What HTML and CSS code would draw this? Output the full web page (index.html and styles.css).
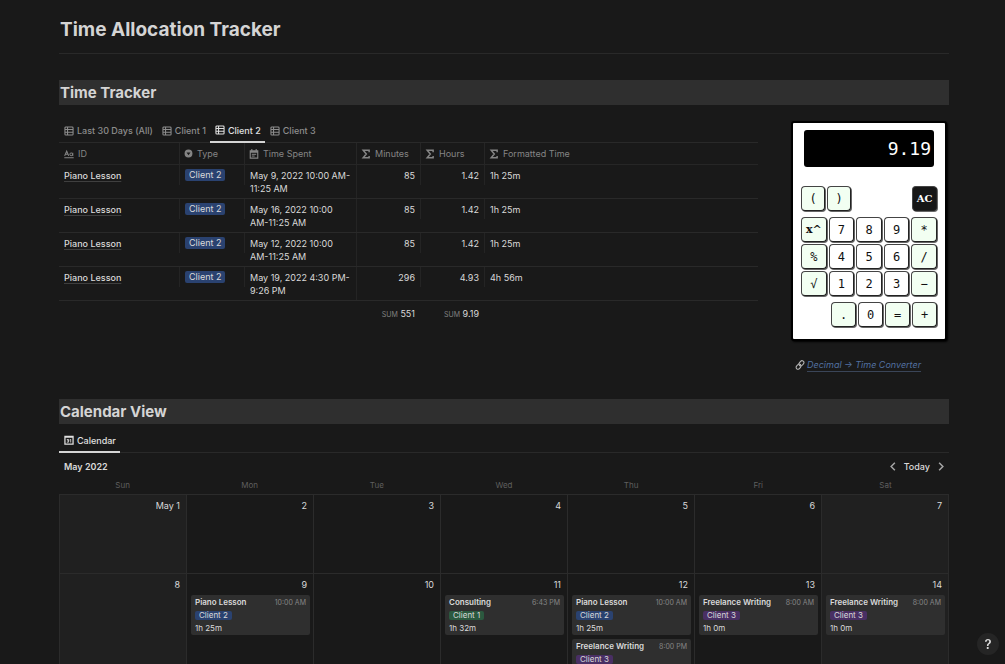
FILE: index.html
```html
<!DOCTYPE html>
<html lang="en">
<head>
<meta charset="utf-8">
<title>Time Allocation Tracker</title>
<link rel="stylesheet" href="styles.css">
</head>
<body>
<svg class="defs" aria-hidden="true">
  <symbol id="i-table" viewBox="0 0 16 16"><path d="M3 1.500h10a1.500 1.500 0 0 1 1.500 1.500v10a1.500 1.500 0 0 1-1.500 1.500H3A1.500 1.500 0 0 1 1.500 13V3A1.500 1.500 0 0 1 3 1.500zM1.500 5.500h13M1.500 10h13M5.700 1.500v13" fill="none" stroke="currentColor" stroke-width="1.700"/></symbol>
  <symbol id="i-sigma" viewBox="0 0 16 16"><path d="M13 5V2H3.500l5 6-5 6H13v-3" fill="none" stroke="currentColor" stroke-width="2.400"/></symbol>
  <symbol id="i-select" viewBox="0 0 16 16"><path fill="currentColor" fill-rule="evenodd" d="M8 1a7 7 0 1 0 0 14A7 7 0 0 0 8 1zM4.500 6h7L8 11z"/></symbol>
  <symbol id="i-date" viewBox="0 0 16 16"><path d="M2 3h12v11.500H2zM2 5h12M4.500 0v3M11.500 0v3" fill="none" stroke="currentColor" stroke-width="1.800"/><path d="M4.500 8.500h7M4.500 11.300h4.500" stroke="currentColor" stroke-width="1.600"/></symbol>
  <symbol id="i-cal" viewBox="0 0 16 16"><path d="M1.500 2h13v12.500h-13zM2 3.500h12" fill="none" stroke="currentColor" stroke-width="2"/><path d="M4.500 7.200H7.300v4.300H4.500M5 9.300h2.300M9 8l1.700-1v5" fill="none" stroke="currentColor" stroke-width="1.300"/></symbol>
  <symbol id="i-title" viewBox="0 0 16 14"><path d="M1 10 4.300 2.500 7.600 10M2.200 7.500h4.200M14 5v5M.5 13h15" fill="none" stroke="currentColor" stroke-width="1.700"/><circle cx="11.500" cy="7.500" r="2.200" fill="none" stroke="currentColor" stroke-width="1.600"/></symbol>
</svg>
<main class="page">
  <h1 class="title">Time Allocation Tracker</h1>
  <h2 class="banner">Time Tracker</h2>
  <div class="split">
    <section class="tracker">
      <nav class="tabs">
        <button class="tab"><svg class="icon"><use href="#i-table"/></svg>Last 30 Days (All)</button>
        <button class="tab"><svg class="icon"><use href="#i-table"/></svg>Client 1</button>
        <button class="tab active"><svg class="icon"><use href="#i-table"/></svg>Client 2</button>
        <button class="tab"><svg class="icon"><use href="#i-table"/></svg>Client 3</button>
      </nav>
      <table class="grid">
        <colgroup><col class="c-id"><col class="c-type"><col class="c-date"><col class="c-num"><col class="c-num"><col></colgroup>
        <thead><tr>
          <th><span class="head"><svg class="icon"><use href="#i-title"/></svg>ID</span></th>
          <th><span class="head"><svg class="icon small"><use href="#i-select"/></svg>Type</span></th>
          <th><span class="head"><svg class="icon"><use href="#i-date"/></svg>Time Spent</span></th>
          <th><span class="head"><svg class="icon"><use href="#i-sigma"/></svg>Minutes</span></th>
          <th><span class="head"><svg class="icon"><use href="#i-sigma"/></svg>Hours</span></th>
          <th><span class="head"><svg class="icon"><use href="#i-sigma"/></svg>Formatted Time</span></th>
        </tr></thead>
        <tbody>
          <tr><td><a class="name" href="#">Piano Lesson</a></td><td><span class="tag blue">Client 2</span></td><td class="full">May 9, 2022 10:00 AM-<br>11:25 AM</td><td class="num">85</td><td class="num">1.42</td><td>1h 25m</td></tr>
          <tr><td><a class="name" href="#">Piano Lesson</a></td><td><span class="tag blue">Client 2</span></td><td class="full">May 16, 2022 10:00<br>AM-11:25 AM</td><td class="num">85</td><td class="num">1.42</td><td>1h 25m</td></tr>
          <tr><td><a class="name" href="#">Piano Lesson</a></td><td><span class="tag blue">Client 2</span></td><td class="full">May 12, 2022 10:00<br>AM-11:25 AM</td><td class="num">85</td><td class="num">1.42</td><td>1h 25m</td></tr>
          <tr><td><a class="name" href="#">Piano Lesson</a></td><td><span class="tag blue">Client 2</span></td><td class="full">May 19, 2022 4:30 PM-<br>9:26 PM</td><td class="num">296</td><td class="num">4.93</td><td>4h 56m</td></tr>
        </tbody>
        <tfoot><tr><td></td><td></td><td></td><td class="num"><small>SUM</small> 551</td><td class="num"><small>SUM</small> 9.19</td><td></td></tr></tfoot>
      </table>
    </section>
    <aside class="side">
      <div class="calc">
        <output class="screen">9.19</output>
        <div class="keys top"><button class="key op">(</button><button class="key op">)</button><button class="key clear">AC</button></div>
        <div class="keys pad">
          <button class="key op slab">x^</button><button class="key">7</button><button class="key">8</button><button class="key">9</button><button class="key op">*</button>
          <button class="key op">%</button><button class="key">4</button><button class="key">5</button><button class="key">6</button><button class="key op">/</button>
          <button class="key op">√</button><button class="key">1</button><button class="key">2</button><button class="key">3</button><button class="key op">−</button>
        </div>
        <div class="keys bottom"><button class="key op">.</button><button class="key">0</button><button class="key op">=</button><button class="key op">+</button></div>
      </div>
      <p class="convert"><svg class="chain" viewBox="0 0 16 16"><g transform="rotate(-50 8 8)" fill="none" stroke="currentColor" stroke-width="1.700"><rect x="0" y="5" width="9" height="6" rx="3"/><rect x="7" y="5" width="9" height="6" rx="3"/></g></svg><a href="#">Decimal → Time Converter</a></p>
    </aside>
  </div>
  <h2 class="banner second">Calendar View</h2>
  <section class="calendar">
    <nav class="tabs caltabs"><button class="tab active"><svg class="icon"><use href="#i-cal"/></svg>Calendar</button></nav>
    <div class="calbar">
      <strong>May 2022</strong>
      <div class="pager">
        <button aria-label="Previous month"><svg class="chev" viewBox="0 0 8 12"><path d="M6.500 1 1.500 6l5 5"/></svg></button>
        <button class="today">Today</button>
        <button aria-label="Next month"><svg class="chev" viewBox="0 0 8 12"><path d="M1.500 1 6.500 6l-5 5"/></svg></button>
      </div>
    </div>
    <div class="week names"><span>Sun</span><span>Mon</span><span>Tue</span><span>Wed</span><span>Thu</span><span>Fri</span><span>Sat</span></div>
    <div class="week days">
      <div class="day off"><p>May 1</p></div><div class="day"><p>2</p></div><div class="day"><p>3</p></div><div class="day"><p>4</p></div><div class="day"><p>5</p></div><div class="day"><p>6</p></div><div class="day off"><p>7</p></div>
      <div class="day off"><p>8</p></div>
      <div class="day"><p>9</p>
        <article class="event"><header><b>Piano Lesson</b><time>10:00 AM</time></header><span class="tag blue">Client 2</span><div>1h 25m</div></article></div>
      <div class="day"><p>10</p></div>
      <div class="day"><p>11</p>
        <article class="event"><header><b>Consulting</b><time>6:43 PM</time></header><span class="tag green">Client 1</span><div>1h 32m</div></article></div>
      <div class="day"><p>12</p>
        <article class="event"><header><b>Piano Lesson</b><time>10:00 AM</time></header><span class="tag blue">Client 2</span><div>1h 25m</div></article>
        <article class="event"><header><b>Freelance Writing</b><time>8:00 PM</time></header><span class="tag purple">Client 3</span></article></div>
      <div class="day"><p>13</p>
        <article class="event"><header><b>Freelance Writing</b><time>8:00 AM</time></header><span class="tag purple">Client 3</span><div>1h 0m</div></article></div>
      <div class="day off"><p>14</p>
        <article class="event"><header><b>Freelance Writing</b><time>8:00 AM</time></header><span class="tag purple">Client 3</span><div>1h 0m</div></article></div>
    </div>
  </section>
</main>
<button class="help" aria-label="Help">?</button>
</body>
</html>
```

FILE: styles.css
```css
* { box-sizing: border-box; }
body {
  margin: 0;
  height: 100vh;
  overflow: hidden;
  background: #191919;
  color: #dadada;
  font: 9px/13px Inter, "Liberation Sans", sans-serif;
}
button { font: inherit; color: inherit; background: none; border: 0; padding: 0; }
h1, h2, p { margin: 0; }
.defs { display: none; }
.page { padding: 6px 56px 0 59px; }

.title {
  height: 48px;
  padding: 0 1px;
  border-bottom: 1px solid #292929;
  color: #d4d4d4;
  font-size: 19px;
  line-height: 48px;
  font-weight: 700;
}
.banner {
  margin-top: 26px;
  padding: 0 1px;
  background: #2f2f2f;
  color: #d4d4d4;
  font-size: 15px;
  line-height: 25px;
  font-weight: 700;
}
.banner.second { margin-top: 28px; }

.split { display: flex; align-items: flex-start; gap: 33px; }
.tracker { flex: 1; padding-top: 14px; }
.icon { width: 10px; height: 10px; flex: none; }
.icon.small { width: 9px; height: 9px; }
.tabs { display: flex; height: 24px; border-bottom: 1px solid #292929; }
.tab {
  display: flex;
  align-items: center;
  gap: 3px;
  height: 23px;
  padding: 0 4px 0 5px;
  color: #8d8d8d;
  font-weight: 500;
  white-space: nowrap;
}
.tab.active { height: 24px; color: #e0e0e0; border-bottom: 2px solid #d4d4d4; }

.grid { width: 100%; table-layout: fixed; border-spacing: 0; }
.c-id { width: 121px; }
.c-type { width: 65px; }
.c-date { width: 112px; }
.c-num { width: 64px; }
th {
  height: 22px;
  padding: 0 5px 0 4px;
  border-right: 1px solid #262626;
  border-bottom: 1px solid #262626;
  color: #858585;
  font-weight: 400;
}
th:first-child { padding-left: 5px; }
.head { display: flex; align-items: center; gap: 4px; }
td {
  padding: 4px 5px;
  border-bottom: 1px solid #292929;
  line-height: 13px;
  vertical-align: top;
  white-space: nowrap;
  background: linear-gradient(#242424, #242424) right top / 1px 20px no-repeat;
}
td.full { padding-bottom: 3px; background-size: 1px 100%; }
td:nth-child(n+4) { padding-right: 6px; }
th:last-child { border-right: 0; }
td:last-child { background: none; }
.num { text-align: right; }
tfoot td { border: 0; padding-top: 6px; background: none; }
small { font-size: 7px; color: #808080; }
.name { color: inherit; font-weight: 500; text-decoration: underline; text-decoration-color: #3f3f3f; text-underline-offset: 2px; }
.tag { display: inline-block; padding: 0 4px; border-radius: 2px; line-height: 12px; }
td .tag { display: block; width: fit-content; }
.blue { background: #2a4270; }
.green { background: #2b593f; }
.purple { background: #492f64; }

.side { width: 158px; padding-top: 16px; }
.calc {
  width: 156px;
  padding: 7px 8px 12px;
  border: 2px solid #000;
  border-radius: 3px;
  background: #fff;
  box-shadow: 1px 1px 2px #000;
  color: #111;
}
.screen {
  display: block;
  margin: 0 3px 19px;
  padding: 0 3px;
  border-radius: 3px;
  background: #000;
  color: #fff;
  font: 18px/37px "DejaVu Sans Mono", monospace;
  text-align: right;
}
.keys { display: grid; gap: 2px; grid-template-columns: repeat(5, 1fr); }
.keys.top { grid-template-columns: 24px 24px 1fr; margin-bottom: 6px; }
.keys.bottom { grid-template-columns: repeat(4, 25px); justify-content: end; margin-top: 6px; }
.key {
  height: 25px;
  border: 1px solid #444;
  border-right-color: #222;
  border-bottom-color: #222;
  border-radius: 4px;
  background: #fff;
  box-shadow: 1px 1px 0 #666;
  font: 12px "DejaVu Sans Mono", monospace;
}
.key.op { background: #f2fff2; }
.key.slab { font: bold 11px "DejaVu Serif", serif; }
.key.clear { width: 25px; justify-self: end; background: #161616; color: #fff; font: bold 10px "DejaVu Serif", serif; }
.convert { display: flex; align-items: center; gap: 2px; padding: 17px 4px 0; }
.convert a { color: #5270a0; font-style: italic; text-decoration-color: #3a4558; text-underline-offset: 3px; white-space: nowrap; }
.chain { width: 10px; height: 10px; color: #b5b5b5; }

.calendar { padding-top: 5px; }
.calbar { display: flex; justify-content: space-between; align-items: center; height: 26px; padding: 0 5px; }
strong { font-weight: 600; }
.pager { display: flex; align-items: center; gap: 8px; }
.today { font-weight: 500; }
.chev { display: block; width: 6px; height: 9px; fill: none; stroke: #a5a5a5; stroke-width: 2; }
.week { display: grid; grid-template-columns: repeat(7, 1fr); }
.names { height: 15px; text-align: center; color: #5f5f5f; font-size: 8px; }
.days { border-top: 1px solid #2b2b2b; border-left: 1px solid #2b2b2b; }
.day { min-width: 0; min-height: 79px; padding: 0 3px 0 4px; border-right: 1px solid #2b2b2b; border-bottom: 1px solid #2b2b2b; }
.day p { padding-right: 3px; line-height: 21px; text-align: right; }
.off { background: #202020; }
.event {
  margin-bottom: 4px;
  padding: 1px 4px 0;
  height: 40px;
  border-radius: 2px;
  background: #2f2f2f;
  font-size: 8px;
}
.event header { display: flex; justify-content: space-between; }
.event b { font-weight: 600; }
.event time { font-size: 7px; color: #858585; }
.event .tag { display: block; width: fit-content; margin: 2px 0; line-height: 9px; }
.help {
  position: fixed;
  right: 6px;
  bottom: 9px;
  width: 22px;
  height: 22px;
  border-radius: 50%;
  background: #252525;
  font-size: 13px;
  font-weight: 600;
}
```
